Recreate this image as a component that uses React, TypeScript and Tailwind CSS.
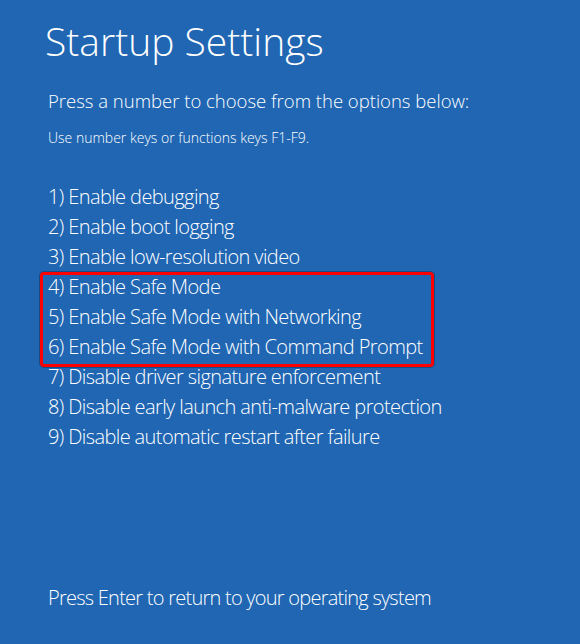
const options = [
  '1) Enable debugging',
  '2) Enable boot logging',
  '3) Enable low-resolution video',
];

const safeModes = [
  '4) Enable Safe Mode',
  '5) Enable Safe Mode with Networking',
  '6) Enable Safe Mode with Command Prompt',
];

const moreOptions = [
  '7) Disable driver signature enforcement',
  '8) Disable early launch anti-malware protection',
  '9) Disable automatic restart after failure',
];

export default function App() {
  return (
    <div className="flex h-[644px] w-[580px] flex-col overflow-hidden bg-[#2066b3] pl-[48px] font-['Open_Sans',sans-serif] text-white">
      <h1 className="-ml-[3px] mt-[16px] text-[39px] leading-[50px] font-light">Startup Settings</h1>
      <p className="mt-[22px] text-[18.5px] leading-[26px] font-light">
        Press a number to choose from the options below:
      </p>
      <p className="mt-[15px] text-[14px] leading-[18px] font-light">Use number keys or functions keys F1-F9.</p>

      <ul className="mt-[35px] flex flex-col text-[20px] leading-[30px] font-light tracking-[-0.6px]">
        {options.map((o) => (
          <li key={o}>{o}</li>
        ))}
        <li className="relative">
          {safeModes.map((o) => (
            <div key={o}>{o}</div>
          ))}
          {/* highlight frame drawn over the three safe mode rows */}
          <span className="pointer-events-none absolute top-0 -bottom-[5px] -left-[8px] w-[394px] rounded-[4px] border-[3px] border-[#ff0000] shadow-[0_0_0_1px_rgba(0,0,0,0.25)]" />
        </li>
        {moreOptions.map((o) => (
          <li key={o}>{o}</li>
        ))}
      </ul>

      <p className="mt-auto mb-[32px] text-[20px] leading-[28px] font-light tracking-[-0.75px]">
        Press Enter to return to your operating system
      </p>
    </div>
  );
}
